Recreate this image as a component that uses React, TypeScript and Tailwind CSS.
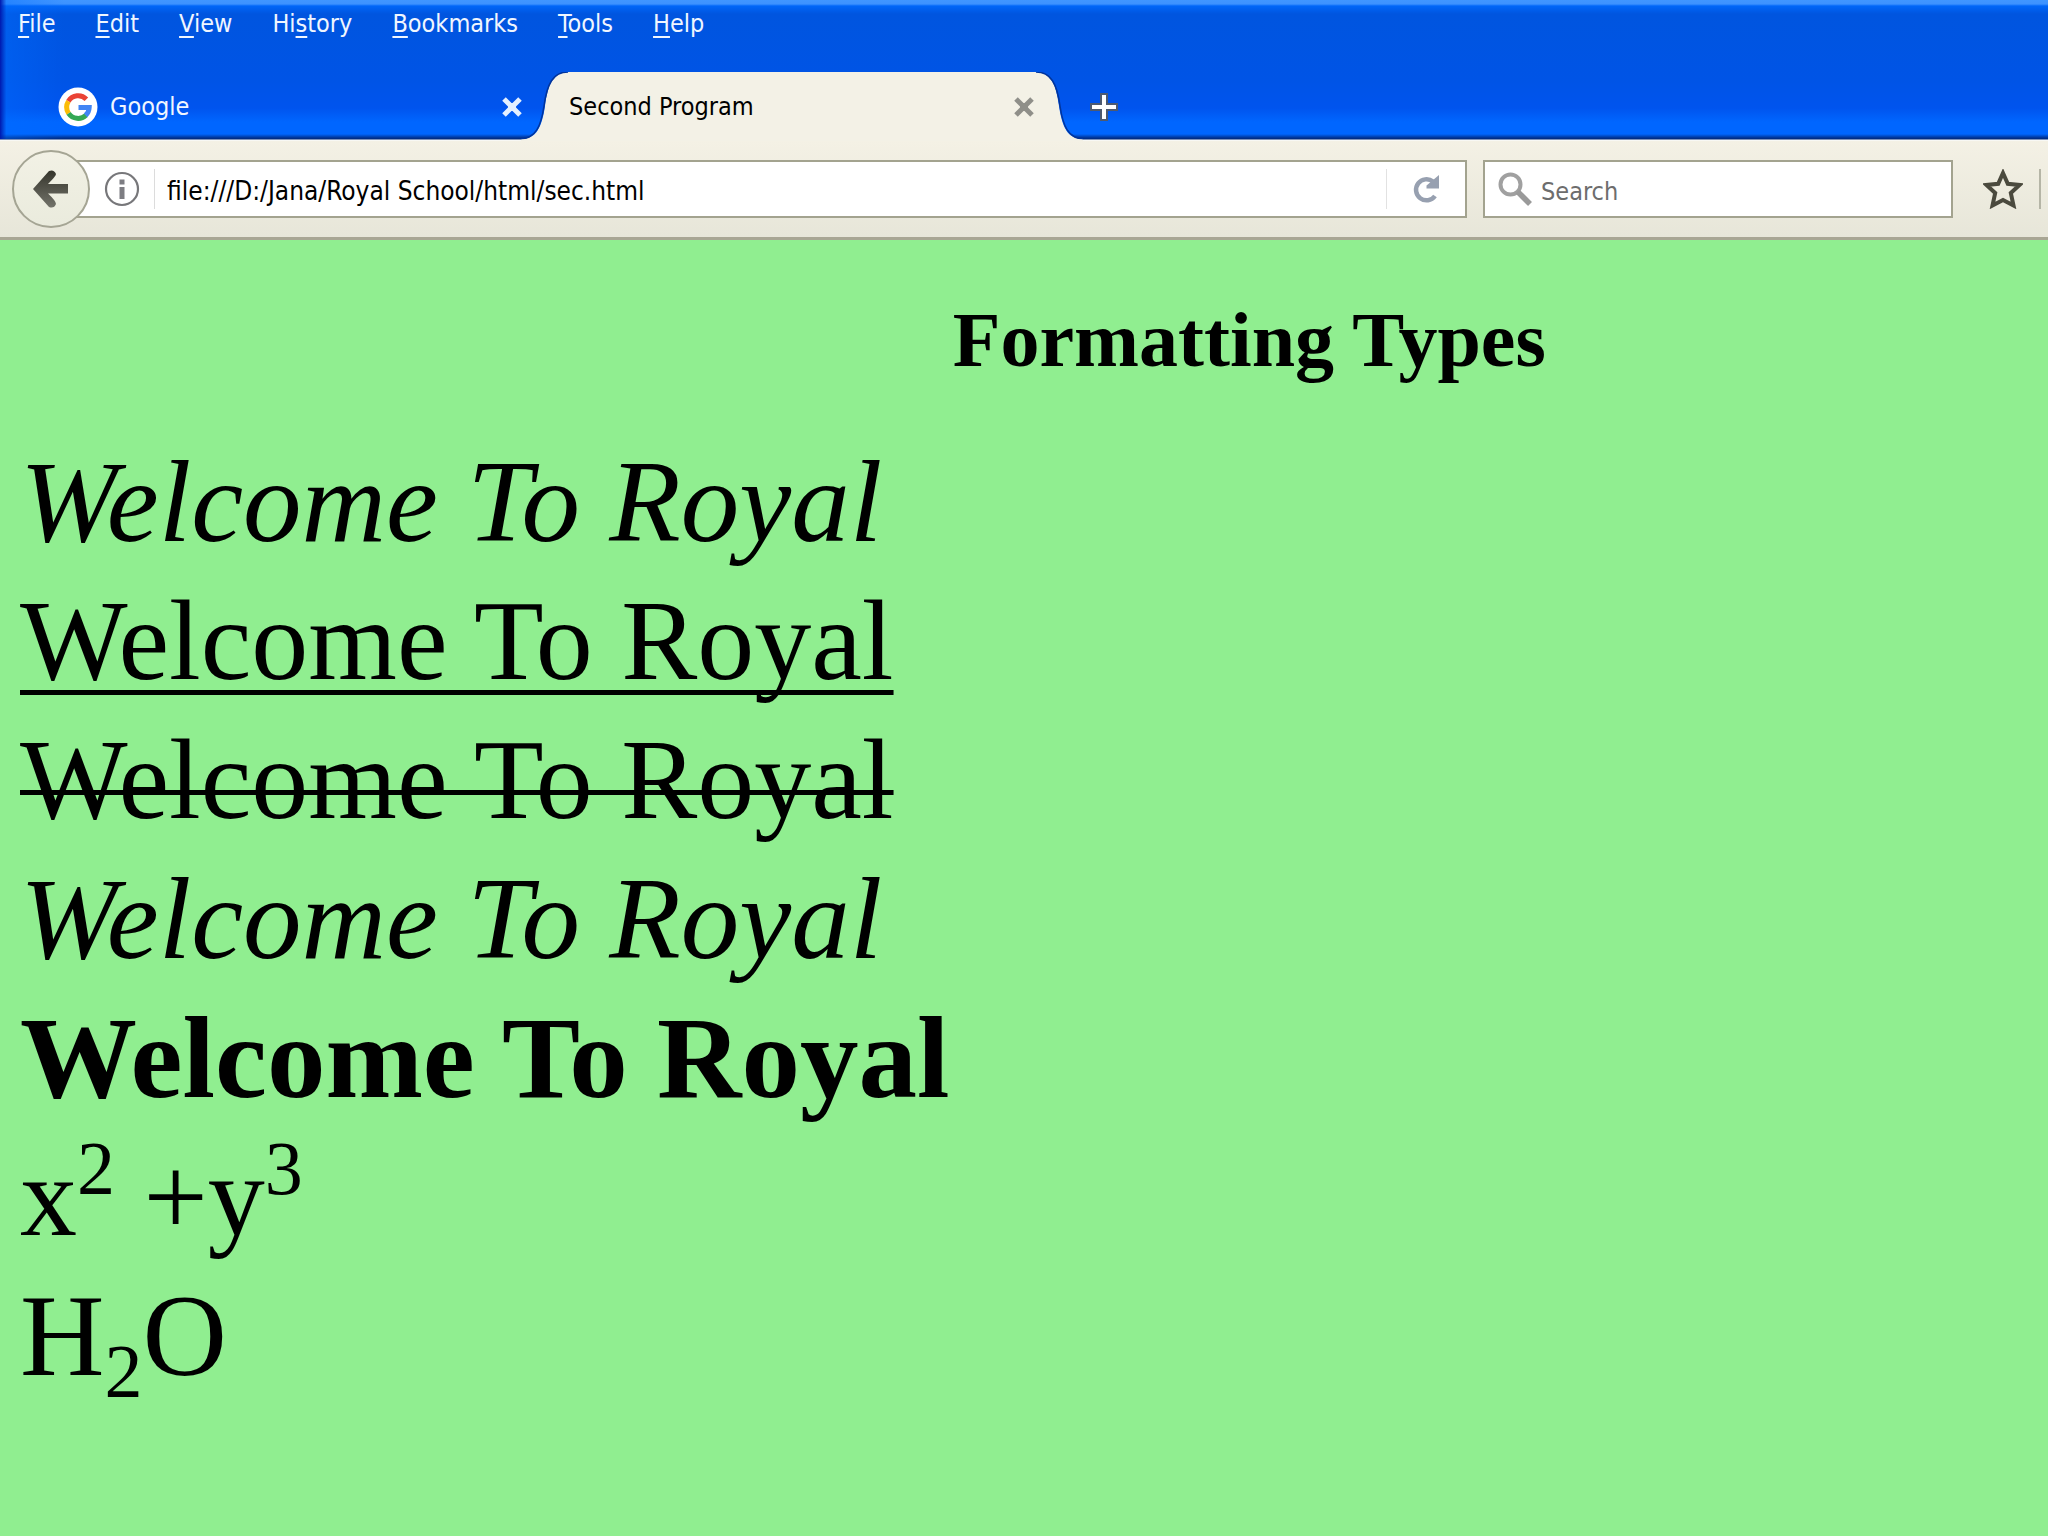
import React, { useState } from 'react';

const menuItems = [
  { before: '', key: 'F', after: 'ile' },
  { before: '', key: 'E', after: 'dit' },
  { before: '', key: 'V', after: 'iew' },
  { before: 'Hi', key: 's', after: 'tory' },
  { before: '', key: 'B', after: 'ookmarks' },
  { before: '', key: 'T', after: 'ools' },
  { before: '', key: 'H', after: 'elp' },
];

function GoogleIcon() {
  return (
    <svg viewBox="0 0 40 40" className="w-10 h-10 shrink-0" aria-hidden="true">
      <circle cx="20" cy="20" r="19.5" fill="#fff" />
      <g fill="none" strokeWidth="5">
        <path d="M10.4 14.2A11.5 11.5 0 0 1 28.4 12.2" stroke="#ea4335" />
        <path d="M10.6 26.4A11.5 11.5 0 0 1 10.4 14.2" stroke="#fbbc05" />
        <path d="M28 28.2A11.5 11.5 0 0 1 10.6 26.4" stroke="#34a853" />
        <path d="M20.5 20.5H31.2A11.5 11.5 0 0 1 27.6 28.4" stroke="#4285f4" />
      </g>
    </svg>
  );
}

function CloseIcon() {
  return (
    <svg viewBox="0 0 22 22" className="w-[22px] h-[22px]" aria-hidden="true">
      <path d="M3 3L19 19M19 3L3 19" stroke="currentColor" strokeWidth="5" />
      <path d="M7 7h8v8H7z" fill="currentColor" />
    </svg>
  );
}

function PlusIcon() {
  return (
    <svg viewBox="0 0 30 30" className="w-[30px] h-[30px]" aria-hidden="true">
      <path
        d="M12 2h6v10h10v6H18v10h-6V18H2v-6h10z"
        fill="#fff"
        stroke="#4d5a70"
        strokeWidth="2"
      />
    </svg>
  );
}

function BackIcon() {
  return (
    <svg viewBox="0 0 40 40" className="w-10 h-10" aria-hidden="true">
      <defs>
        <linearGradient id="arrow" x1="0" y1="0" x2="0" y2="1">
          <stop offset="0" stopColor="#35352c" />
          <stop offset="1" stopColor="#73736a" />
        </linearGradient>
      </defs>
      <path
        d="M2 20L18 2Q23 0 25 5Q25 7 17 15H37V24.500H17Q25 32 25 35Q23 40 18 38Z"
        fill="url(#arrow)"
      />
    </svg>
  );
}

function InfoIcon() {
  return (
    <svg viewBox="0 0 36 36" className="w-9 h-9" aria-hidden="true">
      <circle cx="18" cy="18" r="16" fill="#fff" stroke="#77777a" strokeWidth="2.200" />
      <path d="M15.500 8.500h5v5h-5zM15.500 16h5v12h-5z" fill="#7d7d82" />
    </svg>
  );
}

function ReloadIcon() {
  return (
    <svg viewBox="0 0 30 30" className="w-[30px] h-[30px]" aria-hidden="true">
      <path d="M22 7.500A10.500 10.500 0 1 0 24 22" fill="none" stroke="#97a0b0" strokeWidth="4.500" />
      <path d="M28 1V14.500H15.500V11.500Z" fill="#97a0b0" />
    </svg>
  );
}

function SearchIcon() {
  return (
    <svg viewBox="0 0 36 36" className="w-9 h-9 shrink-0" aria-hidden="true">
      <circle cx="13.500" cy="13.500" r="10" fill="none" stroke="#a0a0a0" strokeWidth="4" />
      <path d="M20.500 20.500L33 33" stroke="#9a9a9a" strokeWidth="5.500" />
    </svg>
  );
}

function StarIcon() {
  return (
    <svg viewBox="0 0 40 40" className="w-10 h-10" aria-hidden="true">
      <path
        d="M20 4L24.800 14.800L36.500 16L27.800 24L30.500 36.500L20 31L9.500 36.500L12.200 24L3.500 16L15.200 14.800Z"
        fill="none"
        stroke="#4b4a3e"
        strokeWidth="4"
      />
    </svg>
  );
}

function TabCurve({ flip = false }: { flip?: boolean }) {
  return (
    <svg
      viewBox="0 0 52 69"
      className={`w-[52px] h-[69px] shrink-0 ${flip ? '-scale-x-100' : ''}`}
      aria-hidden="true"
    >
      <path d="M4 69V67.500C20 67 25 54 28 34C31 12 36 0 52 0V69Z" fill="#f3f1e6" />
      <path d="M4 66.500C19 66 24 54 27 34C30 12 36 0 51 0" fill="none" stroke="#00349c" strokeWidth="1.500" />
    </svg>
  );
}

function MenuBar() {
  return (
    <nav className="flex gap-10 h-[72px] pt-2 pl-[18px] text-[25px] leading-8">
      {menuItems.map((item) => (
        <button key={item.before + item.key + item.after} className="h-8">
          {item.before}
          <span className="underline decoration-2 underline-offset-4">{item.key}</span>
          {item.after}
        </button>
      ))}
    </nav>
  );
}

function TabStrip() {
  return (
    <div className="flex h-[69px] text-[25px] leading-8">
      <div className="flex items-center w-[523px] pl-[58px]">
        <button className="flex flex-1 items-center gap-3">
          <GoogleIcon />
          <span>Google</span>
        </button>
        <button aria-label="Close Google" className="text-[#e4f0ff]">
          <CloseIcon />
        </button>
      </div>
      <div className="flex -ml-1.5">
        <TabCurve />
        <div className="flex items-center w-[466px] bg-[#f3f1e6] text-black">
          <button className="flex-1 text-left">Second Program</button>
          <button aria-label="Close Second Program" className="text-[#8f8f89]">
            <CloseIcon />
          </button>
        </div>
        <TabCurve flip />
      </div>
      <button aria-label="New tab" className="ml-0.5">
        <PlusIcon />
      </button>
    </div>
  );
}

function NavBar() {
  const [address, setAddress] = useState('file:///D:/Jana/Royal School/html/sec.html');
  const [query, setQuery] = useState('');

  return (
    <div className="flex items-center h-[99px] pl-3 border-b-3 border-[#a8a694] bg-linear-to-b from-[#f4f1e5] to-[#e7e6d9] text-[25px]">
      <button
        aria-label="Back"
        className="relative z-10 flex items-center justify-center w-[78px] h-[78px] rounded-full border-2 border-[#a5a594] bg-linear-to-b from-[#f2f1e5] to-[#eaebdd] shrink-0"
      >
        <BackIcon />
      </button>
      <div className="flex flex-1 items-center h-[58px] -ml-4 pl-7 border-2 border-[#a3a38f] bg-white">
        <button aria-label="Site information">
          <InfoIcon />
        </button>
        <div className="w-px h-10 ml-3.5 bg-[#dcdcdc]" />
        <input
          aria-label="Address"
          value={address}
          onChange={(e) => setAddress(e.target.value)}
          className="flex-1 h-full pl-3 pt-1 text-[26px] text-black outline-none"
        />
        <div className="w-px h-10 bg-[#e2e2e2]" />
        <button aria-label="Reload" className="px-6">
          <ReloadIcon />
        </button>
      </div>
      <div className="flex items-center gap-2 w-[470px] h-[58px] ml-4 pl-3 border-2 border-[#a3a38f] bg-white">
        <SearchIcon />
        <input
          aria-label="Search"
          placeholder="Search"
          value={query}
          onChange={(e) => setQuery(e.target.value)}
          className="flex-1 min-w-0 h-full pt-1 text-black placeholder:text-[#6d6d6d] outline-none"
        />
      </div>
      <button aria-label="Bookmark this page" className="ml-[30px]">
        <StarIcon />
      </button>
      <div className="w-0.5 h-10 ml-4 mr-[7px] bg-[#b5b5a6]" />
    </div>
  );
}

export default function App() {
  return (
    <div className="min-h-screen overflow-hidden bg-[#90ee90]">
      <header className="font-['DejaVu_Sans_Condensed','DejaVu_Sans',sans-serif]">
        <div className="relative bg-[linear-gradient(to_bottom,#4096ff_0px,#3d92ff_4px,#0066f8_6px,#0055df_14px,#0054e6_80px,#0054ee_108px,#0066ff_122px,#0066ff_134px,#00308f_138px,#002a80_139px,#f8f8f4_140px)] text-[#f0f6ff]">
          <div className="absolute top-0 left-0 w-16 h-[139px] bg-linear-to-r from-[#0018b0] via-[#006cff]/40 via-10% to-transparent" />
          <div className="relative">
            <MenuBar />
            <TabStrip />
          </div>
        </div>
        <NavBar />
      </header>

      {/* the document is wider than the window, so its centre sits right of the middle */}
      <main className="w-[122%] px-5 pt-14 text-black font-['Liberation_Serif',serif]">
        <h1 className="text-center text-[78px] leading-[88px] font-bold">Formatting Types</h1>
        <div className="mt-12 text-[114px] leading-[139px]">
          <p className="text-[117px]">
            <i>Welcome To Royal</i>
          </p>
          <p>
            <u className="decoration-[5px] underline-offset-[11px] [text-decoration-skip-ink:none]">Welcome To Royal</u>
          </p>
          <p>
            {/* strike line set a little lower than the font's own */}
            <s className="underline decoration-[5px] underline-offset-[-28px] [text-decoration-skip-ink:none]">Welcome To Royal</s>
          </p>
          <p className="text-[117px]">
            <em>Welcome To Royal</em>
          </p>
          <p className="text-[117px]">
            <b className="font-bold">Welcome To Royal</b>
          </p>
          <p>
            x<sup className="top-0 align-[41px] text-[76px] leading-0">2</sup> +y
            <sup className="top-0 align-[41px] text-[76px] leading-0">3</sup>
          </p>
          <p className="text-[117px]">
            H<sub className="bottom-0 align-[-22px] text-[76px] leading-0">2</sub>O
          </p>
        </div>
      </main>
    </div>
  );
}
